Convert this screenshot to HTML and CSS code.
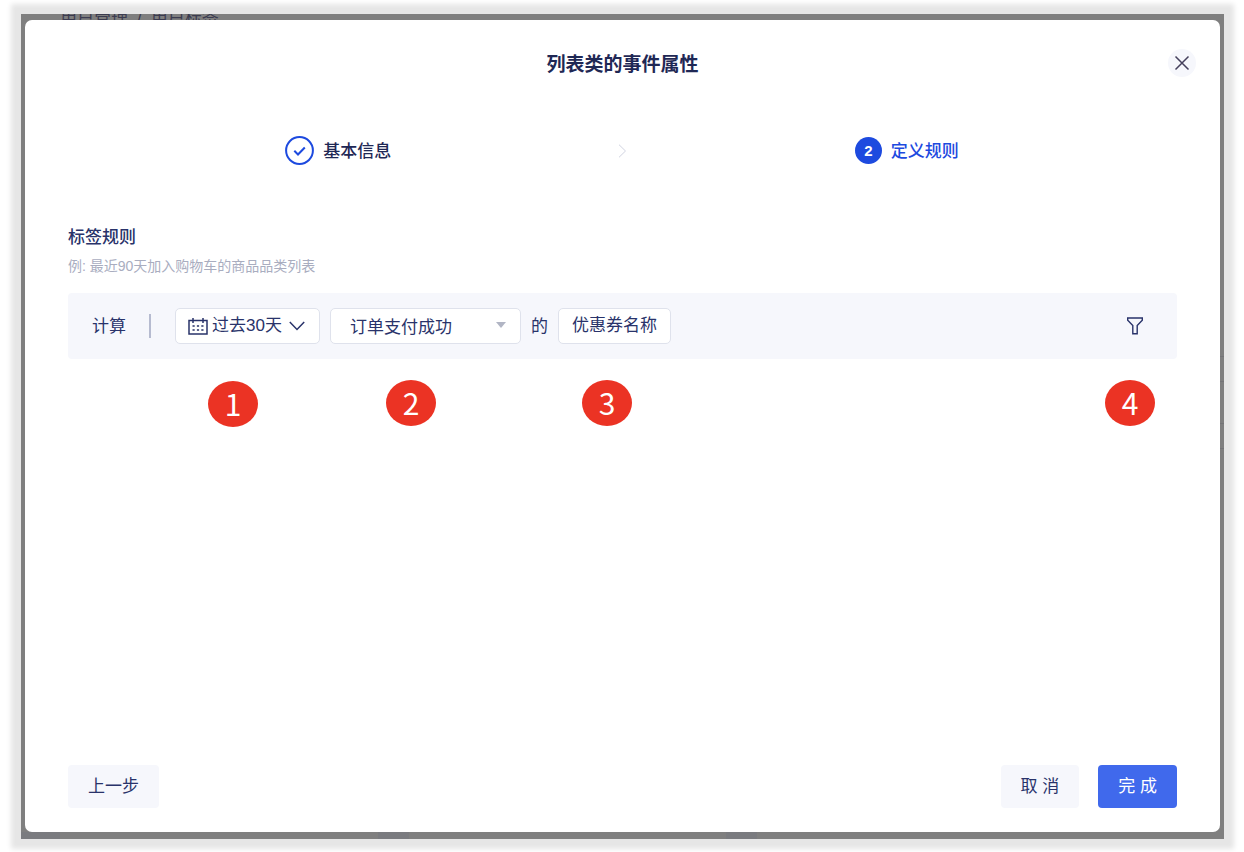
FILE: index.html
```html
<!DOCTYPE html>
<html lang="zh-CN">
<head>
<meta charset="utf-8">
<title>列表类的事件属性</title>
<link rel="stylesheet" href="styles.css">
</head>
<body>
<div class="window">
  <nav class="breadcrumb"><span>用户管理</span><span>/</span><span>用户标签</span></nav>
  <main class="modal" role="dialog" aria-labelledby="title">
    <header class="modal-header">
      <h1 id="title">列表类的事件属性</h1>
      <button class="close" aria-label="关闭">
        <svg width="16" height="16" viewBox="0 0 16 16"><path d="M1.500 1.500l13 13M14.500 1.500l-13 13"/></svg>
      </button>
    </header>
    <ol class="steps">
      <li class="step done">
        <svg class="step-icon" width="29" height="29" viewBox="0 0 29 29"><circle cx="14.500" cy="14.500" r="13.400"/><path d="M9.300 14.800l3.700 3.700 6.800-7"/></svg>
        <span class="step-label">基本信息</span>
      </li>
      <li class="step-arrow" aria-hidden="true">
        <svg width="9" height="14" viewBox="0 0 9 14"><path d="M1 .7l6.500 6.300L1 13.300"/></svg>
      </li>
      <li class="step current">
        <span class="step-number">2</span>
        <span class="step-label">定义规则</span>
      </li>
    </ol>
    <section class="rules">
      <h2>标签规则</h2>
      <p class="hint">例: 最近90天加入购物车的商品品类列表</p>
      <div class="rule-bar">
        <span class="rule-label">计算</span>
        <span class="divider"></span>
        <div class="field">
          <button class="control period">
            <svg width="20" height="17" viewBox="0 0 20 17"><path d="M1 2.500h18v13.500H1zM5 0v5M15 0v5M4.500 8h2.200M8.900 8h2.200M13.300 8h2.200M4.500 12h2.200M8.900 12h2.200M13.300 12h2.200"/></svg>
            <span>过去30天</span>
            <svg width="16" height="10" viewBox="0 0 16 10"><path d="M.8 1l7.200 7.500L15.200 1"/></svg>
          </button>
          <span class="marker marker-period">1</span>
        </div>
        <div class="field">
          <select class="control event" aria-label="事件"><option>订单支付成功</option></select>
          <svg class="caret" width="10" height="6" viewBox="0 0 10 6"><path d="M0 0h10L5 6z"/></svg>
          <span class="marker marker-event">2</span>
        </div>
        <span class="rule-label">的</span>
        <div class="field">
          <button class="control attribute">优惠券名称</button>
          <span class="marker marker-attribute">3</span>
        </div>
        <div class="field field-filter">
          <button class="filter" aria-label="筛选">
            <svg width="16" height="18" viewBox="0 0 16 18"><path d="M.7 1h14.600v2.200L10.200 8.500V16.700H5.800V8.500L.7 3.200z"/></svg>
          </button>
          <span class="marker marker-filter">4</span>
        </div>
      </div>
    </section>
    <footer class="modal-footer">
      <button class="button previous">上一步</button>
      <button class="button">取 消</button>
      <button class="button primary">完 成</button>
    </footer>
  </main>
</div>
</body>
</html>
```
FILE: styles.css
```css
* { box-sizing: border-box; }

body {
  margin: 0;
  min-height: 100vh;
  display: flex;
  padding: 14px 20px 13px 21px;
  background: #fff;
  color: #29336a;
  font: 17px/24px "Liberation Sans", "Noto Sans CJK SC", sans-serif;
}

h1, h2, p, ol { margin: 0; padding: 0; }

button, select { font: inherit; color: inherit; cursor: pointer; }

svg { display: block; fill: none; stroke: currentColor; }

.window {
  flex: 1;
  display: flex;
  position: relative;
  overflow: hidden;
  padding: 6px 4px 7px;
  background-color: #7f7f7f;
  background-image:
    linear-gradient(#747477, #747477),
    linear-gradient(#747477, #747477),
    linear-gradient(#747477, #747477),
    linear-gradient(#747477, #747477),
    linear-gradient(#7a7b7f, #7a7b7f),
    linear-gradient(#7a7b7f, #7a7b7f),
    linear-gradient(#7a7b7f, #7a7b7f);
  background-repeat: no-repeat;
  background-position: right 342px, right 367px, right 409px, right 434px, left bottom, 357px bottom, 705px bottom;
  background-size: 4px 1px, 4px 1px, 4px 1px, 4px 1px, 39px 7px, 31px 7px, 31px 7px;
  box-shadow: 0 0 5px 10px #e6e6e6;
}

.breadcrumb {
  position: absolute;
  top: -7px;
  left: 39px;
  display: flex;
  gap: 9px;
  color: #3c3c50;
}

.modal {
  flex: 1;
  display: flex;
  flex-direction: column;
  position: relative;
  padding: 0 43px 24px;
  background: #fff;
  border-radius: 7px;
}

.modal-header {
  display: grid;
  grid-template-columns: 1fr auto 1fr;
  align-items: center;
  height: 86px;
  margin-right: -19px;
  margin-left: -19px;
}

.modal-header h1 {
  grid-column: 2;
  padding-top: 3px;
  color: #1f2855;
  font-size: 19px;
  line-height: 28px;
  font-weight: 700;
}

.close {
  justify-self: end;
  display: grid;
  place-items: center;
  width: 28px;
  height: 28px;
  padding: 0;
  border: 0;
  border-radius: 50%;
  background: #f6f7fc;
  color: #45405c;
}

.close svg { stroke-width: 1.5; }

.steps {
  display: grid;
  grid-template-columns: repeat(3, 1fr);
  align-items: center;
  justify-items: center;
  height: 88px;
  padding: 0 128px;
  list-style: none;
}

.step {
  display: flex;
  align-items: center;
  gap: 9px;
  color: #1f2855;
  font-weight: 500;
}

.step-label { padding-top: 3px; }

.step-icon { color: #1d4adf; stroke-width: 2; }

.step.current { color: #1d4adf; }

.step-number {
  width: 27px;
  border-radius: 50%;
  background: #1d4adf;
  color: #fff;
  font-size: 15px;
  line-height: 27px;
  font-weight: 700;
  text-align: center;
}

.step-arrow { padding-top: 2px; color: #d0d3e0; }

.rules { padding-top: 32px; }

.rules h2 { font-size: 17px; font-weight: 500; }

.hint {
  margin-top: 4px;
  color: #a9adbf;
  font-size: 14px;
}

.rule-bar {
  display: flex;
  align-items: center;
  gap: 10px;
  min-height: 66px;
  margin-top: 15px;
  padding: 0 34px 0 24px;
  border-radius: 4px;
  background: #f6f7fc;
}

.rule-label { padding-top: 1px; }

.divider {
  width: 2px;
  height: 24px;
  margin: 0 14px 0 13px;
  background: #b6bbd0;
}

.field { position: relative; }

.control {
  display: flex;
  align-items: center;
  height: 36px;
  border: 1px solid #dfe2ec;
  border-radius: 5px;
  background: #fff;
}

.period { gap: 4px; width: 145px; padding: 0 12px; }
.period svg { flex: none; stroke-width: 1.5; }
.period span { white-space: nowrap; }
.period svg:last-child { margin-left: 3px; }

.event {
  width: 191px;
  padding: 3px 19px 0;
  appearance: none;
}

.caret {
  position: absolute;
  top: 14px;
  right: 15px;
  fill: #b1b5c4;
  stroke: none;
  pointer-events: none;
}

.attribute { padding: 0 13px; }

.field-filter { margin-left: auto; }

.filter { display: block; padding: 0; border: 0; background: none; }
.filter svg { stroke-width: 1.4; }

.marker {
  position: absolute;
  width: 50px;
  height: 46px;
  border-radius: 50%;
  background: #eb3324;
  color: #fff;
  font: 400 30px/45px "Noto Sans CJK SC", sans-serif;
  text-align: center;
}

.marker-period { top: 73px; left: 33px; }
.marker-event { top: 72px; left: 56px; }
.marker-attribute { top: 72px; left: 24px; }
.marker-filter { top: 63px; left: -22px; }

.modal-footer {
  display: flex;
  gap: 19px;
  margin-top: auto;
}

.button {
  height: 43px;
  padding: 0 20px;
  border: 0;
  border-radius: 4px;
  background: #f6f7fc;
}

.previous { margin-right: auto; }

.primary { background: #4069ec; color: #fff; }
```
